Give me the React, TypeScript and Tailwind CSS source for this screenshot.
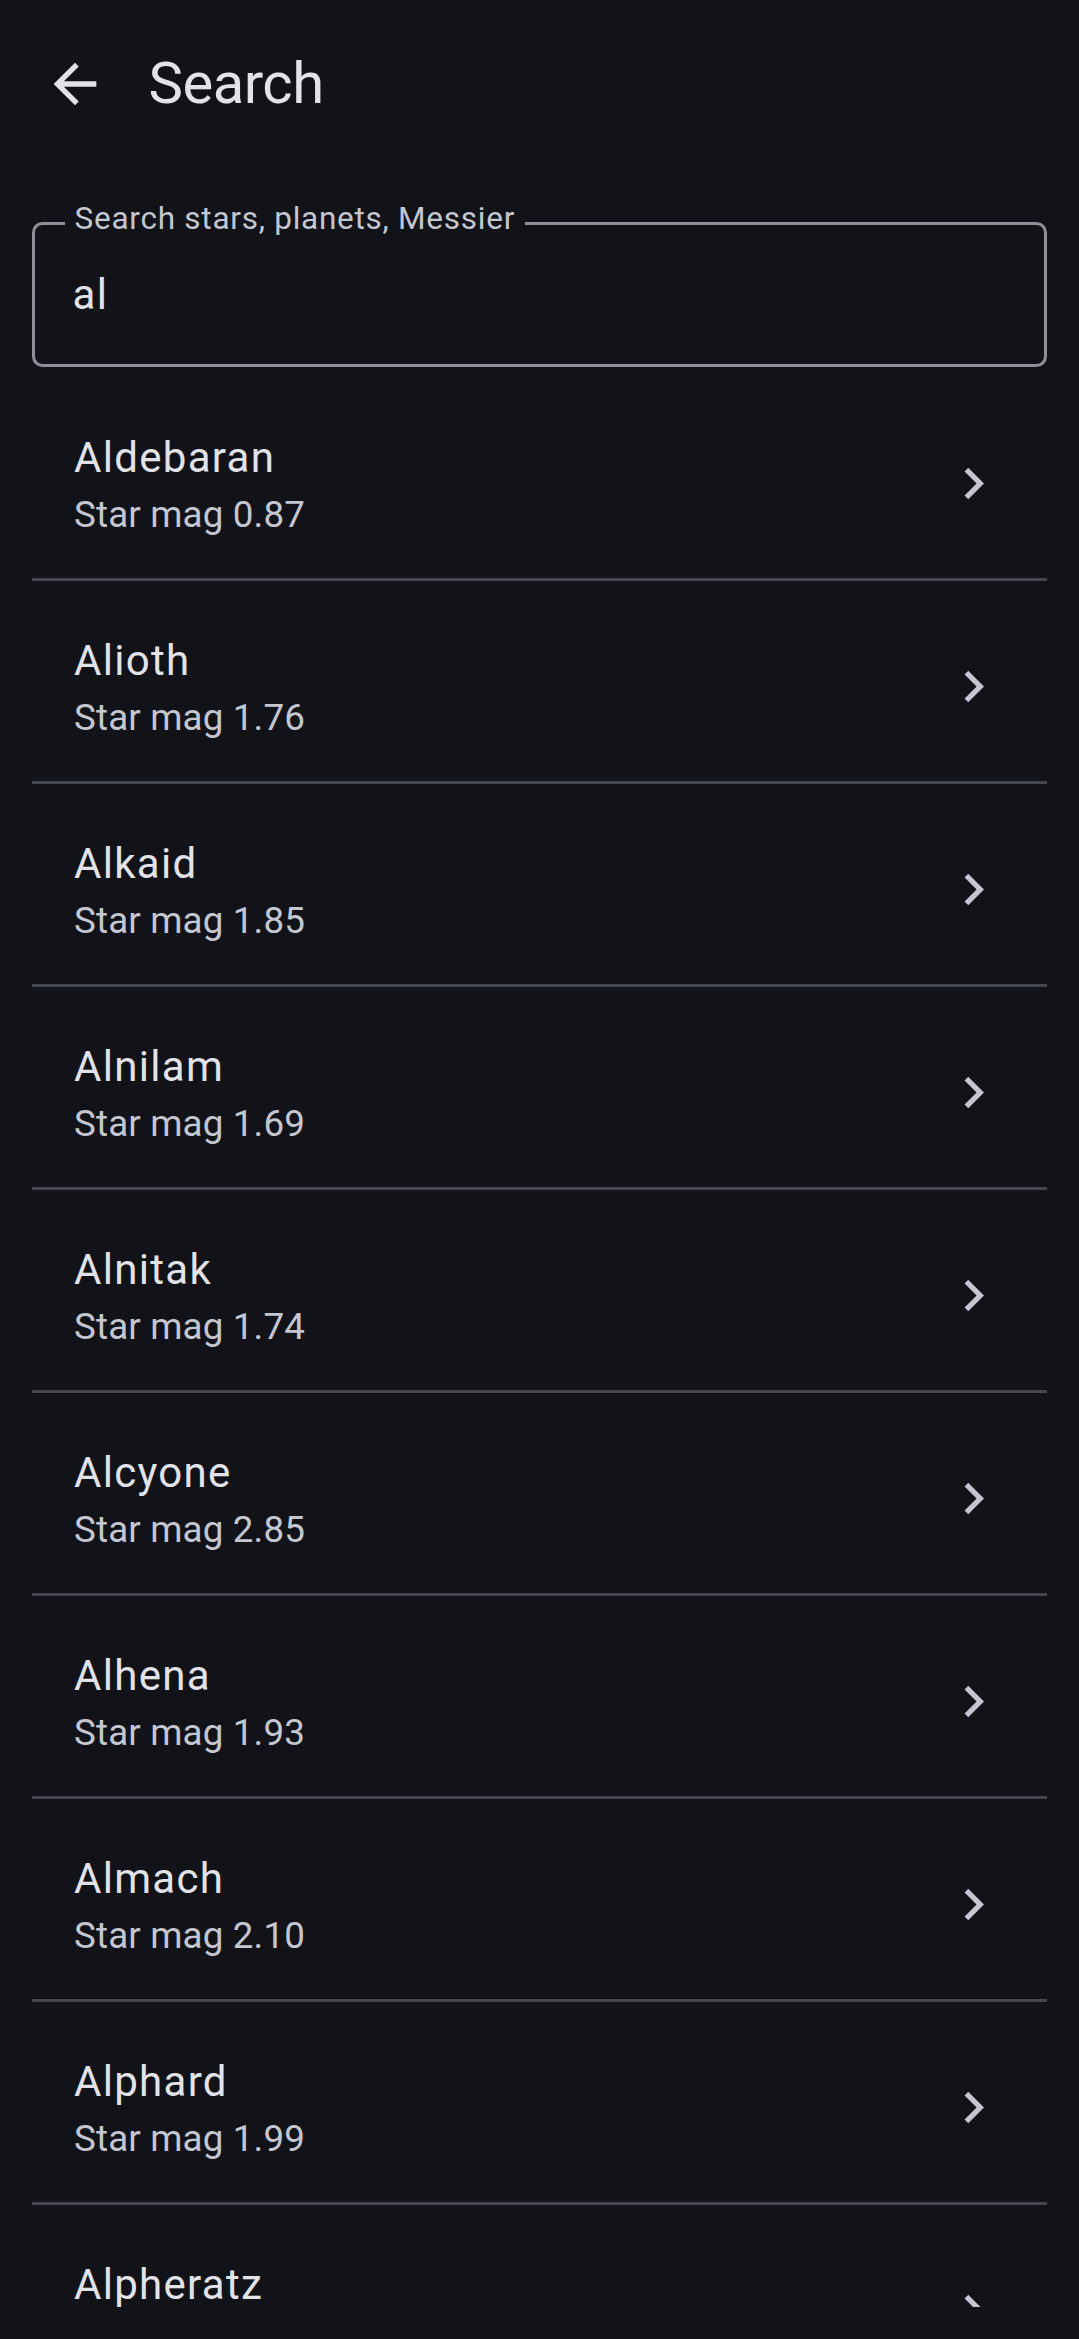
import React from "react";

const items: [string, string][] = [
  ["Aldebaran", "0.87"],
  ["Alioth", "1.76"],
  ["Alkaid", "1.85"],
  ["Alnilam", "1.69"],
  ["Alnitak", "1.74"],
  ["Alcyone", "2.85"],
  ["Alhena", "1.93"],
  ["Almach", "2.10"],
  ["Alphard", "1.99"],
  ["Alpheratz", "2.06"],
];

function BackArrow() {
  return (
    <svg width="64" height="64" viewBox="0 0 24 24" fill="#e2e2e9">
      <path d="M20 11H7.83l5.59-5.59L12 4l-8 8 8 8 1.41-1.41L7.83 13H20v-2z" />
    </svg>
  );
}

function Chevron() {
  return (
    <svg width="63" height="63" viewBox="0 0 24 24" fill="#c4c6d0">
      <path d="M10 6 8.59 7.41 13.17 12l-4.58 4.59L10 18l6-6z" />
    </svg>
  );
}

export default function App() {
  return (
    <div className="h-[2339px] w-full bg-[#111318] flex flex-col overflow-hidden font-['Roboto',sans-serif]">
      <header className="h-[168px] shrink-0 flex items-center">
        <div className="ml-[43px] w-[64px] h-[64px] flex items-center justify-center">
          <BackArrow />
        </div>
        <h1 className="ml-[41.5px] text-[58px] leading-[73.5px] tracking-[-0.5px] text-[#e2e2e9] font-normal">
          Search
        </h1>
      </header>

      <div className="flex-1 overflow-hidden">
        <div className="mt-[54px] mx-[32px] relative h-[145px] border-[3px] border-[#8e9099] rounded-[10.5px] flex items-center pl-[37.5px]">
          <span className="absolute top-[-26px] left-[29.5px] px-[10px] bg-[#111318] text-[31.5px] leading-[40px] tracking-[0.75px] text-[#c4c6d0]">
            Search stars, planets, Messier
          </span>
          <span className="text-[42px] leading-[63px] tracking-[1.3px] text-[#e2e2e9]">al</span>
        </div>

        <div className="mt-[11px] mx-[32px] flex flex-col">
          {items.map(([name, mag], i) => (
            <div key={name} className="flex flex-col">
              <div className="h-[200px] shrink-0 flex items-start pt-[48px] pl-[42px] pr-[42.5px]">
                <div className="flex-1 flex flex-col">
                  <span className="text-[42px] leading-[63px] tracking-[1.3px] text-[#e2e2e9]">{name}</span>
                  <span className="text-[36.75px] leading-[52.5px] tracking-[0.15px] text-[#c4c6d0]">
                    Star mag {mag}
                  </span>
                </div>
                <div className="h-[115.5px] flex items-center">
                  <Chevron />
                </div>
              </div>
              {i < items.length - 1 && <div className="h-[3px] bg-[#44474e] shrink-0" />}
            </div>
          ))}
        </div>
      </div>

      <div className="h-[32px] shrink-0" />
    </div>
  );
}
